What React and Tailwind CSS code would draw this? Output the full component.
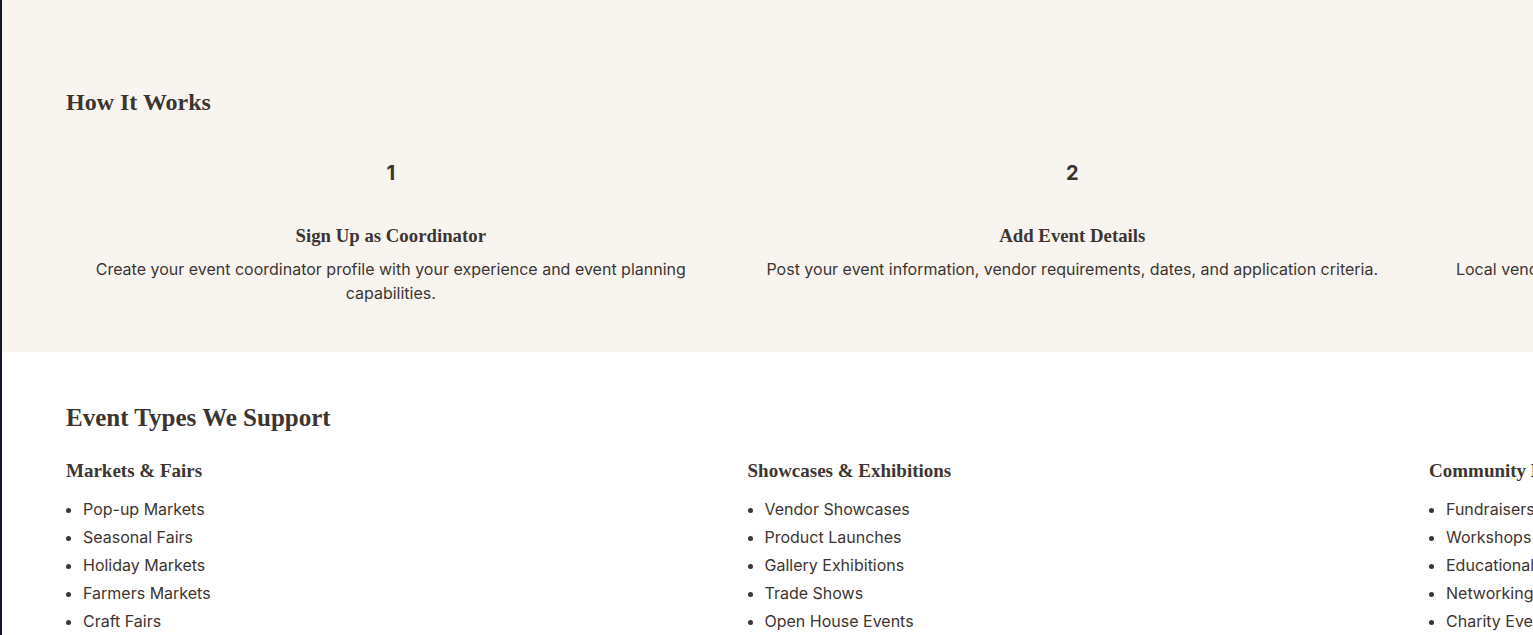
import React from "react";

const serif = { fontFamily: '"Liberation Serif", "Times New Roman", serif' };

const steps = [
  {
    n: "1",
    title: "Sign Up as Coordinator",
    desc: "Create your event coordinator profile with your experience and event planning capabilities.",
  },
  {
    n: "2",
    title: "Add Event Details",
    desc: "Post your event information, vendor requirements, dates, and application criteria.",
  },
  {
    n: "3",
    title: "Review Applications",
    desc: "Local vendors discover your event and send in applications for you to approve.",
  },
];

const types = [
  {
    title: "Markets & Fairs",
    items: ["Pop-up Markets", "Seasonal Fairs", "Holiday Markets", "Farmers Markets", "Craft Fairs"],
  },
  {
    title: "Showcases & Exhibitions",
    items: ["Vendor Showcases", "Product Launches", "Gallery Exhibitions", "Trade Shows", "Open House Events"],
  },
  {
    title: "Community Events",
    items: ["Fundraisers", "Workshops", "Educational Events", "Networking Events", "Charity Events"],
  },
];

export default function App() {
  return (
    <div
      className="w-screen h-[635px] overflow-hidden bg-white border-l-2 border-[#111827] text-[#3d3531]"
      style={{ fontFamily: 'Inter, "Noto Sans", sans-serif' }}
    >
      <div className="w-[2200px]">
        <section className="bg-[#f8f5f1] pt-[86px] pb-[47px] pl-[64px]">
          <h2 className="text-[24px] leading-8 font-bold mb-[23px]" style={serif}>
            How It Works
          </h2>
          <div className="grid grid-cols-[649.5px_649.5px_649.5px] gap-8">
            {steps.map((s) => (
              <div key={s.n} className="flex flex-col items-center text-center">
                <div className="w-16 h-16 flex items-center justify-center text-[20px] leading-7 font-bold text-[#3a3330] mb-4">
                  {s.n}
                </div>
                <h3 className="text-[18.8px] leading-7 font-bold mb-2 pt-px" style={serif}>
                  {s.title}
                </h3>
                <p className="text-base leading-6 -mt-px">{s.desc}</p>
              </div>
            ))}
          </div>
        </section>
        <section className="bg-white pt-[50px] pl-[64px]">
          <h2 className="text-[25px] leading-8 font-bold mb-[23px]" style={serif}>
            Event Types We Support
          </h2>
          <div className="grid grid-cols-[649.5px_649.5px_649.5px] gap-8">
            {types.map((t) => (
              <div key={t.title}>
                <h3 className="text-[19px] leading-7 font-bold mb-3" style={serif}>
                  {t.title}
                </h3>
                <ul className="list-disc pl-[17px] flex flex-col gap-1 text-base leading-6">
                  {t.items.map((i) => (
                    <li key={i}>{i}</li>
                  ))}
                </ul>
              </div>
            ))}
          </div>
        </section>
      </div>
    </div>
  );
}
